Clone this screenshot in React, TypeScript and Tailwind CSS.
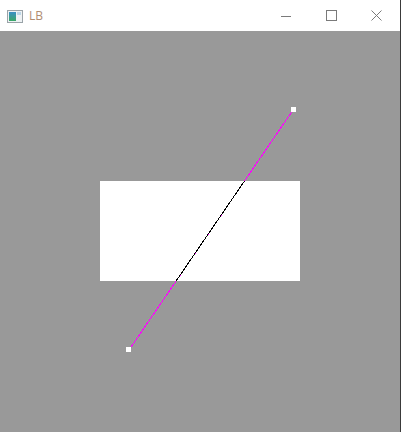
import React from "react";

export default function App() {
  return (
    <div className="w-[401px] h-[432px] flex flex-col bg-white border-r border-[#3a3a3a] overflow-hidden">
      <div className="h-[31px] flex items-center shrink-0 bg-white">
        <svg width="16" height="13" viewBox="0 0 16 13" className="ml-[7px] mt-[1px]">
          <defs>
            <linearGradient id="g" x1="0" y1="0" x2="0" y2="1">
              <stop offset="0" stopColor="#3a8fc6" />
              <stop offset="1" stopColor="#3aa866" />
            </linearGradient>
          </defs>
          <rect x="0.5" y="0.5" width="15" height="12" fill="#eef2f4" stroke="#9aa3a8" />
          <rect x="2" y="2" width="7" height="9" fill="url(#g)" />
          <rect x="10" y="2" width="4" height="3" fill="#bcd6e6" />
        </svg>
        <span className="ml-[6px] text-[12px] text-[#b08d72] leading-none" style={{ fontFamily: '"Open Sans", "Noto Sans", sans-serif' }}>
          LB
        </span>
        <div className="ml-auto flex items-center h-full">
          <div className="w-[46px] h-full flex items-center justify-center">
            <svg width="10" height="10" viewBox="0 0 10 10"><line x1="0" y1="5.5" x2="10" y2="5.5" stroke="#7a7a7a" /></svg>
          </div>
          <div className="w-[45px] h-full flex items-center justify-center">
            <svg width="11" height="11" viewBox="0 0 11 11"><rect x="0.5" y="0.5" width="10" height="10" fill="none" stroke="#7a7a7a" /></svg>
          </div>
          <div className="w-[45px] h-full flex items-center justify-center mr-[1px]">
            <svg width="11" height="11" viewBox="0 0 11 11"><path d="M0.5 0.5 L10.5 10.5 M10.5 0.5 L0.5 10.5" stroke="#7a7a7a" /></svg>
          </div>
        </div>
      </div>
      <div className="flex-1 bg-[#999999]">
        <svg width="400" height="401" viewBox="0 31 400 401">
          <rect x="100" y="181" width="200" height="100" fill="#ffffff" />
          <line x1="293" y1="110" x2="129" y2="350" stroke="#ff00ff" strokeWidth="1" shapeRendering="crispEdges" />
          <line x1="244.5" y1="181" x2="176.1" y2="281" stroke="#000000" strokeWidth="1" shapeRendering="crispEdges" />
          <rect x="291" y="107" width="5" height="5" fill="#ffffff" />
          <rect x="126" y="347" width="5" height="5" fill="#ffffff" />
        </svg>
      </div>
    </div>
  );
}
